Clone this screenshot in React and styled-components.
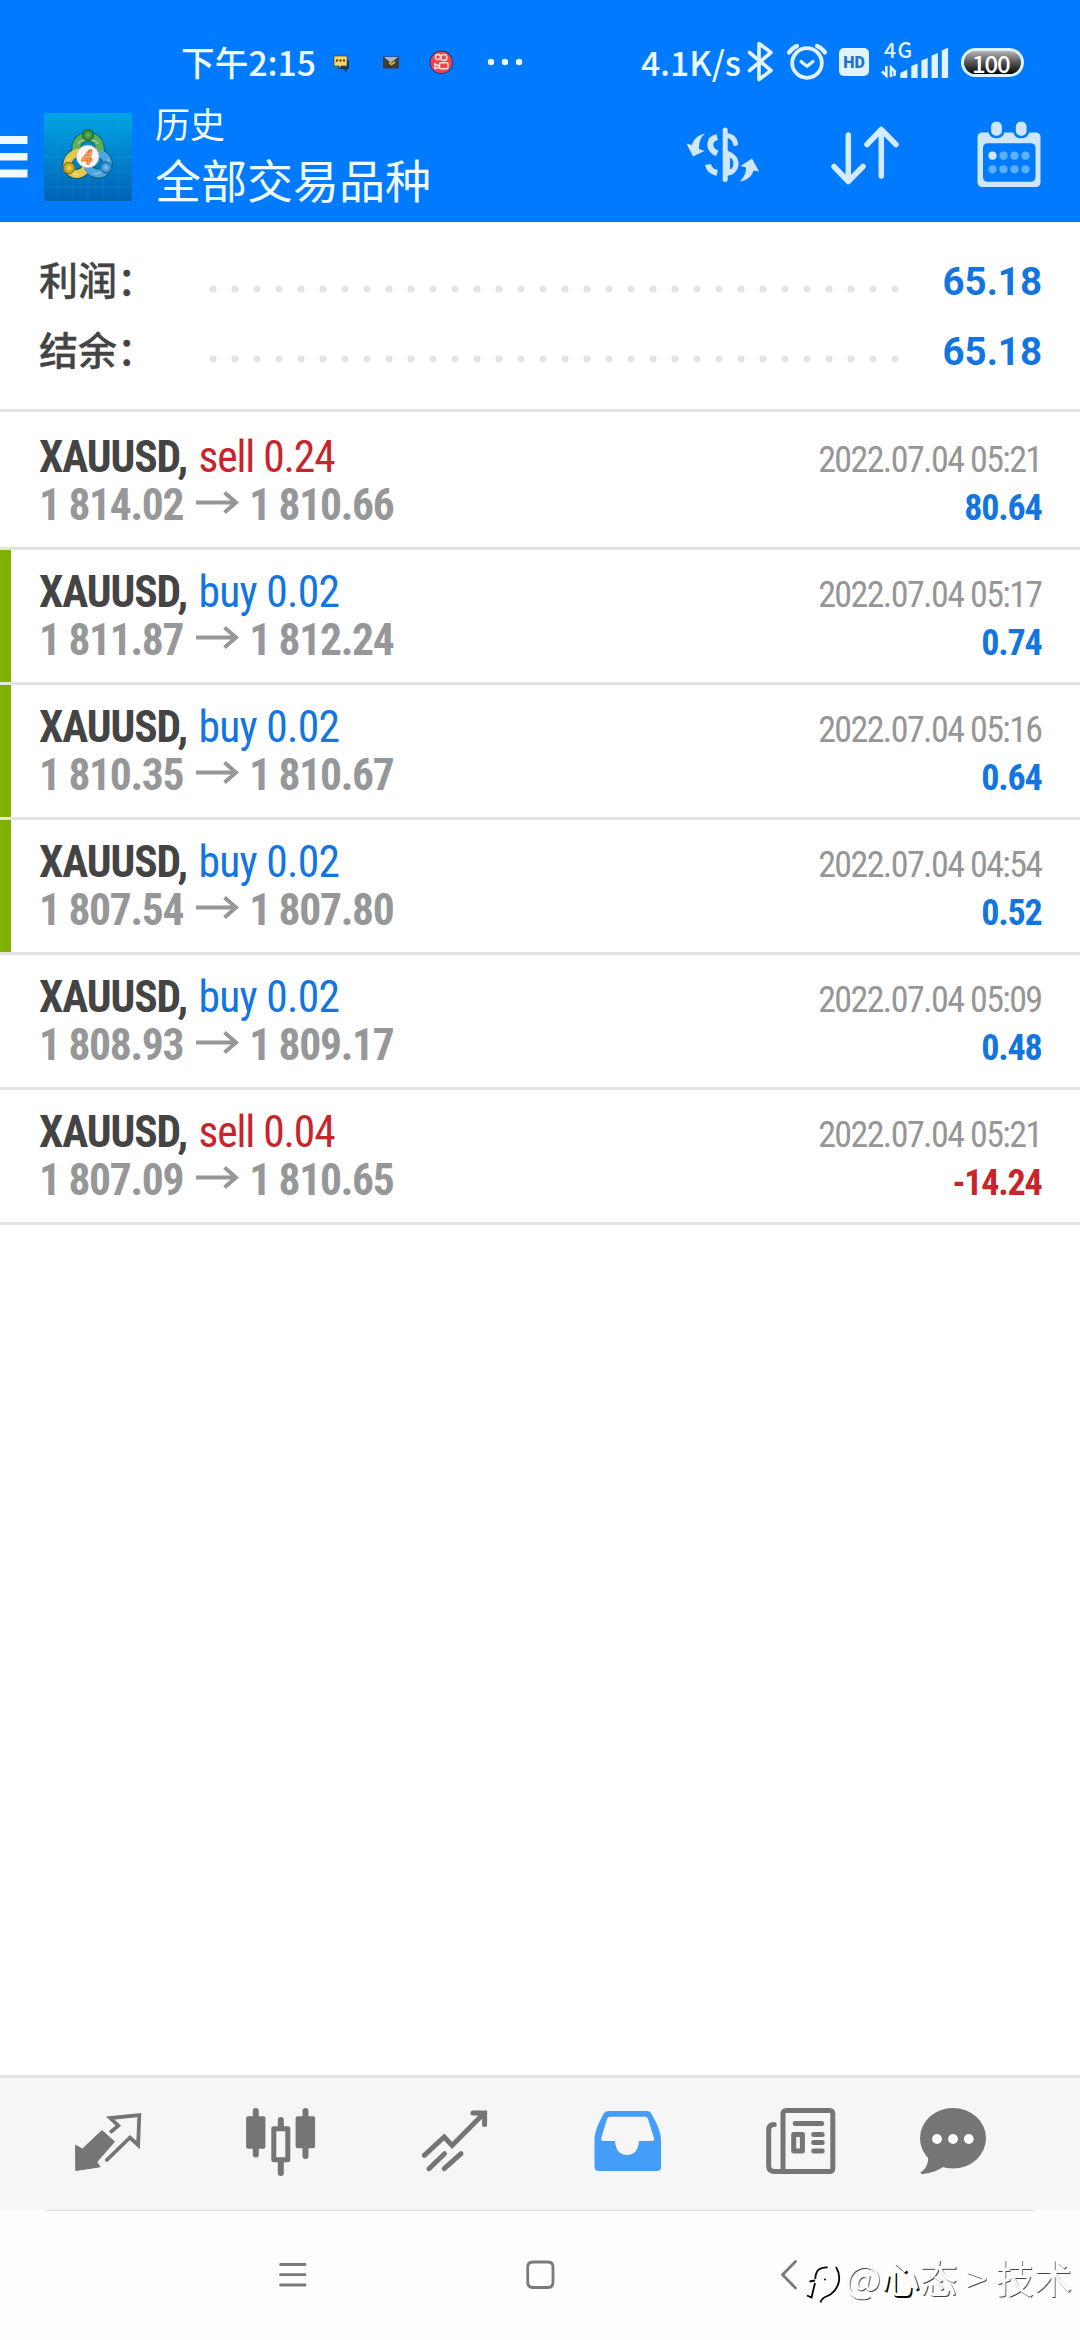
import React from "react";
import styled, { createGlobalStyle } from "styled-components";

const CJK = `"Noto Sans CJK SC", "Noto Sans", sans-serif`;
const CONDENSED = `"Roboto Condensed", Roboto, "Noto Sans CJK SC", sans-serif`;
const BLUE = "#1275e0";
const RED = "#c9232b";

const Global = createGlobalStyle`
  * { box-sizing: border-box; }
  body { margin: 0; background: #fff; }
  svg { display: block; flex: none; }
`;

const Screen = styled.div`
  position: relative;
  display: flex;
  flex-direction: column;
  width: 1080px;
  height: 2340px;
  overflow: hidden;
  background: #fff;
`;

const Header = styled.header`
  flex: none;
  height: 222px;
  background: #007aff;
  border-bottom: 1px solid #1468cf;
`;

const StatusBar = styled.div`
  display: flex;
  justify-content: space-between;
  align-items: center;
  height: 92px;
  padding: 32px 56px 0 181px;
  color: #eefaff;
  font: 500 33.7px/60px ${CJK};
`;

const StatusGroup = styled.div`
  display: flex;
  align-items: center;
`;

const StatusText = styled.span`
  white-space: nowrap;
  margin-right: ${(p) => p.$after}px;
`;

const Battery = styled.div`
  display: flex;
  align-items: center;
  width: 63px;
  height: 29px;
  margin-left: 9px;
  padding-left: 8px;
  border: 3px solid #d9f2ff;
  border-radius: 15px;
  background: linear-gradient(#b5b5b5, #555 50%, #050505);
  color: #fff;
  font: 500 24px/23px ${CJK};
  letter-spacing: -1.2px;
`;

const AppBar = styled.div`
  display: flex;
  align-items: center;
  height: 129px;
`;

const AppIcon = styled.div`
  margin: 0 23px 0 16px;
`;

const Titles = styled.div`
  flex: 1;
  margin-top: -8px;
  color: #f0fbff;
  font-family: ${CJK};
  white-space: nowrap;
`;

const Subtitle = styled.div`
  font-size: 35px;
  line-height: 50px;
`;

const Title = styled.div`
  font-size: 46px;
  line-height: 60px;
`;

const Actions = styled.div`
  display: flex;
  gap: 63.5px;
  padding-right: 31.5px;
`;

const Summary = styled.section`
  flex: none;
  padding: 23px 38px 24px 39px;
  border-bottom: 3px solid #e3e3e3;
`;

const SummaryRow = styled.div`
  display: flex;
  align-items: center;
  height: 70px;
`;

const SummaryLabel = styled.div`
  width: 163px;
  padding-bottom: 4px;
  color: #444;
  font: 500 39px/56px ${CJK};
  -webkit-text-stroke: 0.3px #444;
`;

const Leader = styled.div`
  width: 704px;
  height: 22px;
  margin-top: 17px;
  background: radial-gradient(circle, #e3e3e3 3.2px, transparent 3.9px) 0 0 / 22px 22px;
`;

const SummaryValue = styled.div`
  flex: 1;
  padding-top: 3px;
  text-align: right;
  color: ${BLUE};
  font: 700 38.5px/50px Roboto, sans-serif;
`;

const Deals = styled.main`
  flex: 1;
  padding-top: 3px;
`;

const Deal = styled.article`
  height: 135px;
  padding: 19px 38.5px 0 39px;
  border-bottom: 3px solid #e3e3e3;
  background: ${(p) => (p.$marked ? "linear-gradient(#7fb000, #7fb000) 0 0 / 11px 132px no-repeat" : "none")};
`;

const Line = styled.div`
  display: flex;
  align-items: baseline;
  justify-content: space-between;
  height: 48px;
  font: 400 43.5px/48px ${CONDENSED};
  white-space: nowrap;
`;

const Symbol = styled.span`
  color: #444;
  font-weight: 700;
  letter-spacing: -1.1px;
`;

const Side = styled.span`
  margin-left: 2.5px;
  color: ${(p) => (p.$sell ? RED : BLUE)};
  letter-spacing: ${(p) => (p.$sell ? -1.1 : -0.7)}px;
`;

const Prices = styled.span`
  display: flex;
  align-items: baseline;
  color: #969799;
  font-weight: 700;
  letter-spacing: -1.3px;
`;

const Arrow = styled.svg`
  margin: 0 10px 0 13px;
`;

const DateText = styled.span`
  color: #969696;
  font-size: 36px;
  letter-spacing: -1.6px;
`;

const Profit = styled.span`
  color: ${(p) => (p.$loss ? RED : BLUE)};
  font-size: 36px;
  font-weight: 700;
  letter-spacing: -1.2px;
`;

const Tabs = styled.nav`
  flex: none;
  display: flex;
  align-items: center;
  height: 135px;
  padding-left: 21.5px;
  background: #f6f6f6;
  border-top: 3px solid #e1e1e1;
`;

const Tab = styled.div`
  display: flex;
  justify-content: center;
  width: ${(p) => (p.$last ? 130 : 173.3)}px;
  color: ${(p) => (p.$active ? "#459dfa" : "#757575")};
`;

const SystemBar = styled.div`
  flex: none;
  display: flex;
  gap: 188px;
  height: 130px;
  padding-left: 263.3px;
  align-items: center;
  background: linear-gradient(#dedede, #dedede) 46px 0 / 988px 1px no-repeat #fefefe;
`;

const Watermark = styled.div`
  position: absolute;
  left: 804px;
  top: 2248px;
  display: flex;
  align-items: center;
  color: #fff;
  font: 400 38.2px/58px ${CJK};
  text-shadow: 0.8px 0.8px 0 #444;
  white-space: nowrap;
`;

const Strong = styled.span`
  text-shadow: 1.6px 1.6px 0 #000;
`;

const deals = [
  { sell: true, side: "sell 0.24", open: "1 814.02", close: "1 810.66", date: "2022.07.04 05:21", profit: "80.64" },
  { marked: true, side: "buy 0.02", open: "1 811.87", close: "1 812.24", date: "2022.07.04 05:17", profit: "0.74" },
  { marked: true, side: "buy 0.02", open: "1 810.35", close: "1 810.67", date: "2022.07.04 05:16", profit: "0.64" },
  { marked: true, side: "buy 0.02", open: "1 807.54", close: "1 807.80", date: "2022.07.04 04:54", profit: "0.52" },
  { side: "buy 0.02", open: "1 808.93", close: "1 809.17", date: "2022.07.04 05:09", profit: "0.48" },
  { sell: true, side: "sell 0.04", open: "1 807.09", close: "1 810.65", date: "2022.07.04 05:21", profit: "-14.24" },
];

const NotificationIcons = () => (
  <svg width="200" height="40" viewBox="330 42 200 40">
    <path d="M337 60h11v9h-2v3l-4-3h-5z" fill="#173a5c" />
    <path d="M333 56h13v10h-6l-2 3v-3h-5z" fill="#f6d469" stroke="#4a4a35" strokeWidth=".7" />
    <path d="M335 59.500h2v2h-2zM338.500 59.500h2v2h-2zM342 59.500h2v2h-2z" fill="#3b3320" />
    <rect x="382" y="56.500" width="16" height="12" fill="#3c3c3c" />
    <path d="M383 57h14l-7 6z" fill="#a6b8c8" />
    <path d="M388 62.500l2.500 2 3.500-2.500" fill="none" stroke="#f0b429" strokeWidth="1.600" />
    <circle cx="440.300" cy="62.300" r="11.700" fill="#24356b" />
    <circle cx="440.300" cy="62.300" r="10.800" fill="#ea4650" />
    <g fill="none" stroke="#ffe6dc" strokeWidth="1.500">
      <circle cx="437" cy="57" r="2.600" />
      <circle cx="442.800" cy="57.500" r="3.100" />
      <rect x="438.500" y="62.800" width="8.500" height="6" rx="1.500" />
      <path d="M438 66l-4-2v4.500l4-1" />
    </g>
    <g fill="#eefaff">
      <circle cx="490" cy="62" r="3.200" />
      <circle cx="504" cy="62" r="3.200" />
      <circle cx="518" cy="62" r="3.200" />
    </g>
  </svg>
);

const SystemIcons = () => (
  <svg width="207" height="62" viewBox="745 31 207 62" fill="none" stroke="#e2f3ff">
    <path d="M749.500 52.500L771 70.500L759 79.500V43.500L771 52.500L749.500 70.500" strokeWidth="3.600" strokeLinejoin="round" strokeLinecap="round" />
    <circle cx="807" cy="63" r="14.800" strokeWidth="3.800" />
    <path d="M801 61.500l6 4.700 6-4.700" strokeWidth="3.200" strokeLinecap="round" strokeLinejoin="round" />
    <path d="M789 52.500Q792 48 797 46M825 52.500Q822 48 817 46" strokeWidth="4.200" strokeLinecap="round" />
    <rect x="839" y="48" width="30" height="28" rx="5" fill="#e2f3ff" stroke="none" />
    <text x="854" y="68" textAnchor="middle" fontFamily="Roboto, sans-serif" fontWeight="900" fontSize="16" fill="#2173c9" stroke="none">HD</text>
    <text x="884" y="58" fontFamily="Noto Sans CJK SC, sans-serif" fontWeight="500" fontSize="21" letterSpacing="1.500" fill="#e2f3ff" stroke="none">4G</text>
    <path d="M882 71.500L886.300 75.500V66M891 77V67.500L895.500 72M894.500 70V76" strokeWidth="2.600" />
    <path d="M900.300 78v-5l7-3.500v8.500zM911.300 78v-12l6.300-2.500v14.500zM921.400 78v-17.500l6.300-2.500v20zM931.600 78v-22.500l6.300-2.500v25zM941.800 78v-27.500l6.300-3v30.500z" fill="#e2f3ff" stroke="none" />
  </svg>
);

const MenuIcon = () => (
  <svg width="28" height="42" viewBox="0 0 28 42" fill="#effaff">
    <path d="M0 0h27.500v8H0zM0 17h27.500v7.500H0zM0 33.500h27.500v8H0z" />
  </svg>
);

const LogoIcon = () => (
  <svg width="88" height="88" viewBox="0 0 88 88">
    <defs>
      <linearGradient id="bg" x1="0" y1="0" x2="0" y2="1">
        <stop offset="0" stopColor="#00a4e4" />
        <stop offset="1" stopColor="#0062b4" />
      </linearGradient>
      <radialGradient id="green"><stop offset="0" stopColor="#6fb85f" /><stop offset="1" stopColor="#1f7a28" /></radialGradient>
      <radialGradient id="gold"><stop offset="0" stopColor="#f3dc55" /><stop offset="1" stopColor="#b08c10" /></radialGradient>
      <radialGradient id="sky"><stop offset="0" stopColor="#8accf5" /><stop offset="1" stopColor="#1f76c2" /></radialGradient>
    </defs>
    <rect width="88" height="88" fill="url(#bg)" />
    <path d="M14 0V88M29 0V88M44 0V88M59 0V88M74 0V88M0 14H88M0 29H88M0 44H88M0 59H88M0 74H88" stroke="#35b5e8" strokeOpacity=".18" />
    <g fill="none">
      <g stroke="#0b5560" strokeWidth="10" strokeOpacity=".7">
        <path d="M32.500 40C31 29 36 24 44 24S57 29 55.500 41" />
        <path d="M35 39C25 42 21 50 25 57C30 63 37 62 42 56" />
        <path d="M54 39C63 42 66 50 62 57C57 63 48 61 44 54" />
      </g>
      <path d="M32.500 40C31 29 36 24 44 24S57 29 55.500 41" stroke="#5fae58" strokeWidth="8" />
      <path d="M35 39C25 42 21 50 25 57C30 63 37 62 42 56" stroke="#e3c84a" strokeWidth="8" />
      <path d="M55 40C63 43 66 50 62 57C57 63 48 61 43 54" stroke="#4ba5df" strokeWidth="8" />
      <path d="M34 31C37 25 51 25 54 31M25 46C22 51 24 60 35 62M64 46C66 51 62 60 50 61" stroke="#e6f5d8" strokeOpacity=".6" strokeWidth="1.200" />
    </g>
    <circle cx="44" cy="22" r="5.600" fill="url(#green)" stroke="#19702a" />
    <circle cx="25" cy="55" r="5.800" fill="url(#gold)" stroke="#8a7210" />
    <circle cx="62" cy="54.500" r="5.800" fill="url(#sky)" stroke="#1769ab" />
    <circle cx="43.700" cy="43.500" r="11.300" fill="#f7f6f2" stroke="#b9b8a8" strokeWidth=".8" />
    <text x="43" y="50.500" textAnchor="middle" fontFamily="Roboto, sans-serif" fontWeight="700" fontStyle="italic" fontSize="20" fill="#f7b98a" stroke="#e8742a" strokeWidth=".9">4</text>
  </svg>
);

const CurrencyIcon = () => (
  <svg width="80" height="80" viewBox="11.500 7 80 80" fill="none" stroke="#cfe6ff" strokeWidth="5" strokeLinecap="round">
    <path d="M54.700 20V69.500" />
    <path d="M55 25.500C60 25.500 64 28 65 33.500" />
    <path d="M55 42.500C63 45.500 66 49 65.500 54C65 60 61 63 55 63.500M57 46V62" />
    <path d="M46.700 27C38 29 37 39 46.700 43.500M37.500 54.500C38.500 59.500 42 62 46.700 63" strokeLinecap="butt" strokeWidth="6" />
    <g fill="#cfe6ff" stroke="none">
      <path d="M35 23.500C30 27 28.500 31.500 28.500 39L34 41L22.500 46.500L16 33.500L21.500 35C23 29 28 24.500 35 23.500z" />
      <path d="M69.500 71.500C74.500 66 75.500 62 75.500 57.500L70 56L81.500 48.500L88.500 61.500L83 60.500C81.500 66 76.500 70.500 69.500 71.500z" />
    </g>
  </svg>
);

const SortIcon = () => (
  <svg width="80" height="80" viewBox="825 117 80 80" fill="none" stroke="#d3eaff" strokeWidth="5.500" strokeLinecap="round" strokeLinejoin="round">
    <path d="M848.300 135V181M834 166.500L848.300 181.500L863 166.500M881.300 176V130M867 144.500L881.300 129.500L896 144.500" />
  </svg>
);

const CalendarIcon = () => (
  <svg width="80" height="80" viewBox="968.500 117 80 80">
    <rect x="977" y="132.500" width="63" height="54.500" rx="4.500" fill="#cfe6ff" />
    <rect x="982.500" y="143.300" width="52.500" height="38.500" rx="4.500" fill="#007aff" />
    <g fill="#cfe6ff" stroke="#007aff" strokeWidth="2.600">
      <rect x="989.300" y="120.500" width="13.400" height="16.500" rx="6" />
      <rect x="1014" y="120.500" width="13.400" height="16.500" rx="6" />
    </g>
    {[155.700, 169.300].map((y) =>
      [992, 1003, 1014, 1025].map((x) => (
        <circle key={x} cx={x} cy={y} r="4.100" fill={x === 992 && y < 160 ? "#cfe9ff" : "#5cb0ff"} />
      ))
    )}
  </svg>
);

const TabSvg = ({ cx, children }) => (
  <svg width="80" height="80" viewBox={`${cx - 40} 44 80 80`} fill="currentColor">
    {children}
  </svg>
);

const stroke = { fill: "none", stroke: "currentColor", strokeLinecap: "round", strokeLinejoin: "round" };

const tabs = [
  { cx: 108.2, art: (
    <>
      <path d="M75.800 85.300L82.600 89L102.200 70.500L114.700 81.700L97 102L100.300 106.800L76 110.500z" stroke="currentColor" strokeWidth="1" strokeLinejoin="round" />
      <path d="M111.500 71.500L118.500 65.700L110.500 58L139.500 55.200L138.300 85L130.200 77.500L107 100" {...stroke} strokeWidth="3.800" strokeLinejoin="miter" />
    </>
  ) },
  { cx: 281.4, art: (
    <>
      <rect x="246.500" y="56.300" width="19.300" height="32.500" rx="2" />
      <rect x="296" y="56.300" width="19.500" height="32" rx="2" />
      <rect x="274.200" y="68.800" width="14" height="31" {...stroke} strokeWidth="5" />
      <path d="M256.200 51V94.500M305.900 51V96M281.200 60V68M281.200 101V113" {...stroke} strokeWidth="6" />
    </>
  ) },
  { cx: 454.7, art: (
    <path d="M424 95.300L443.900 77L451.800 85.500L483.500 53.500M472.700 53H484.300V64.500M428.700 108.700L444.200 93.700M443.900 108.700L460.700 93.700" {...stroke} strokeWidth="5" strokeLinejoin="miter" />
  ) },
  { cx: 628, active: true, art: (
    <path fillRule="evenodd" d="M608.500 51H647C649.500 51 650.500 52 651.500 54C656 62 661 71 661 80V107Q661 111 657 111H599Q594.500 111 594.500 107V80C594.500 71 599.500 61 603.500 54C604.700 52 606 51 608.500 51zM610 56.700Q608 56.700 607.200 58.500L601.300 78Q600.800 81 603.500 81H615C615.500 90 620 95 627 95S638.500 90 639 81H651Q654.800 81 654 78L647.800 58.500Q647 56.700 645 56.700z" />
  ) },
  { cx: 801.3, art: (
    <g {...stroke} strokeWidth="5">
      <rect x="783.300" y="50.500" width="49.800" height="61" rx="3" />
      <path d="M774.500 64.500Q769 64.500 769 70V106Q769 111.500 775 111.500H785M795.500 63.500H822M814 74.500H822.500M814 82.500H822.500M814 91H822.500" />
      <rect x="794" y="74.500" width="8.700" height="16.500" />
    </g>
  ) },
  { cx: 953, last: true, art: (
    <>
      <ellipse cx="953" cy="78.200" rx="33" ry="30.300" />
      <path d="M928 95C929 103 926 109 920.500 112.500Q920.500 114 923 114C931 113 938 110.500 944 106.500z" />
      <g fill="#fff"><circle cx="937" cy="79" r="4.900" /><circle cx="953" cy="79" r="4.900" /><circle cx="968.800" cy="79" r="4.900" /></g>
    </>
  ) },
];

const SysIcon = ({ d }) => (
  <svg width="60" height="60" viewBox="0 0 60 60" fill="none" stroke="#7a7a7a" strokeWidth="2.800" strokeLinecap="round" strokeLinejoin="round">
    <path d={d} />
  </svg>
);

const WatermarkLogo = () => (
  <svg width="41" height="58" viewBox="24 8 41 58" fill="none" stroke="#000" strokeWidth="1.800">
    <path d="M47.700 27.300C40 27 35.500 30 35.300 39M35 40.500L29.500 41.500M35 43L31.500 57.500L27 55.500M56 27C61.500 36 60 47 51 54C46 57.500 41.500 57 40.500 62.500" />
    <circle cx="45" cy="39.500" r="1" fill="#000" stroke="none" />
  </svg>
);

export default function App() {
  return (
    <Screen>
      <Global />
      <Header>
        <StatusBar>
          <StatusGroup>
            <StatusText $after={14.5}>下午2:15</StatusText>
            <NotificationIcons />
          </StatusGroup>
          <StatusGroup>
            <StatusText $after={4}>4.1K/s</StatusText>
            <SystemIcons />
            <Battery>100</Battery>
          </StatusGroup>
        </StatusBar>
        <AppBar>
          <MenuIcon />
          <AppIcon><LogoIcon /></AppIcon>
          <Titles>
            <Subtitle>历史</Subtitle>
            <Title>全部交易品种</Title>
          </Titles>
          <Actions>
            <CurrencyIcon />
            <SortIcon />
            <CalendarIcon />
          </Actions>
        </AppBar>
      </Header>
      <Summary>
        {["利润：", "结余："].map((label) => (
          <SummaryRow key={label}>
            <SummaryLabel>{label}</SummaryLabel>
            <Leader />
            <SummaryValue>65.18</SummaryValue>
          </SummaryRow>
        ))}
      </Summary>
      <Deals>
        {deals.map((d) => (
          <Deal key={d.open} $marked={d.marked}>
            <Line>
              <span>
                <Symbol>XAUUSD, </Symbol>
                <Side $sell={d.sell}>{d.side}</Side>
              </span>
              <DateText>{d.date}</DateText>
            </Line>
            <Line>
              <Prices>
                {d.open}
                <Arrow width="43" height="30" viewBox="0 0 43 30" fill="none" stroke="#969799" strokeWidth="4">
                  <path d="M0 12.500H40M28.500 2.500L40 12.500L28.500 22.500" />
                </Arrow>
                {d.close}
              </Prices>
              <Profit $loss={d.profit.startsWith("-")}>{d.profit}</Profit>
            </Line>
          </Deal>
        ))}
      </Deals>
      <Tabs>
        {tabs.map((t) => (
          <Tab key={t.cx} $active={t.active} $last={t.last}>
            <TabSvg cx={t.cx}>{t.art}</TabSvg>
          </Tab>
        ))}
      </Tabs>
      <SystemBar>
        <SysIcon d="M17.500 19.500H42M17.500 29.700H42M17.500 40H42" />
        <SysIcon d="M22 17H37Q42 17 42 22V37Q42 42.500 37 42.500H22Q16.700 42.500 16.700 37V22Q16.700 17 22 17z" />
        <SysIcon d="M36.500 16.500L23.500 29.700L36.500 43" />
      </SystemBar>
      <Watermark>
        <WatermarkLogo />
        <span>@<Strong>心</Strong>态 &gt; 技术</span>
      </Watermark>
    </Screen>
  );
}
